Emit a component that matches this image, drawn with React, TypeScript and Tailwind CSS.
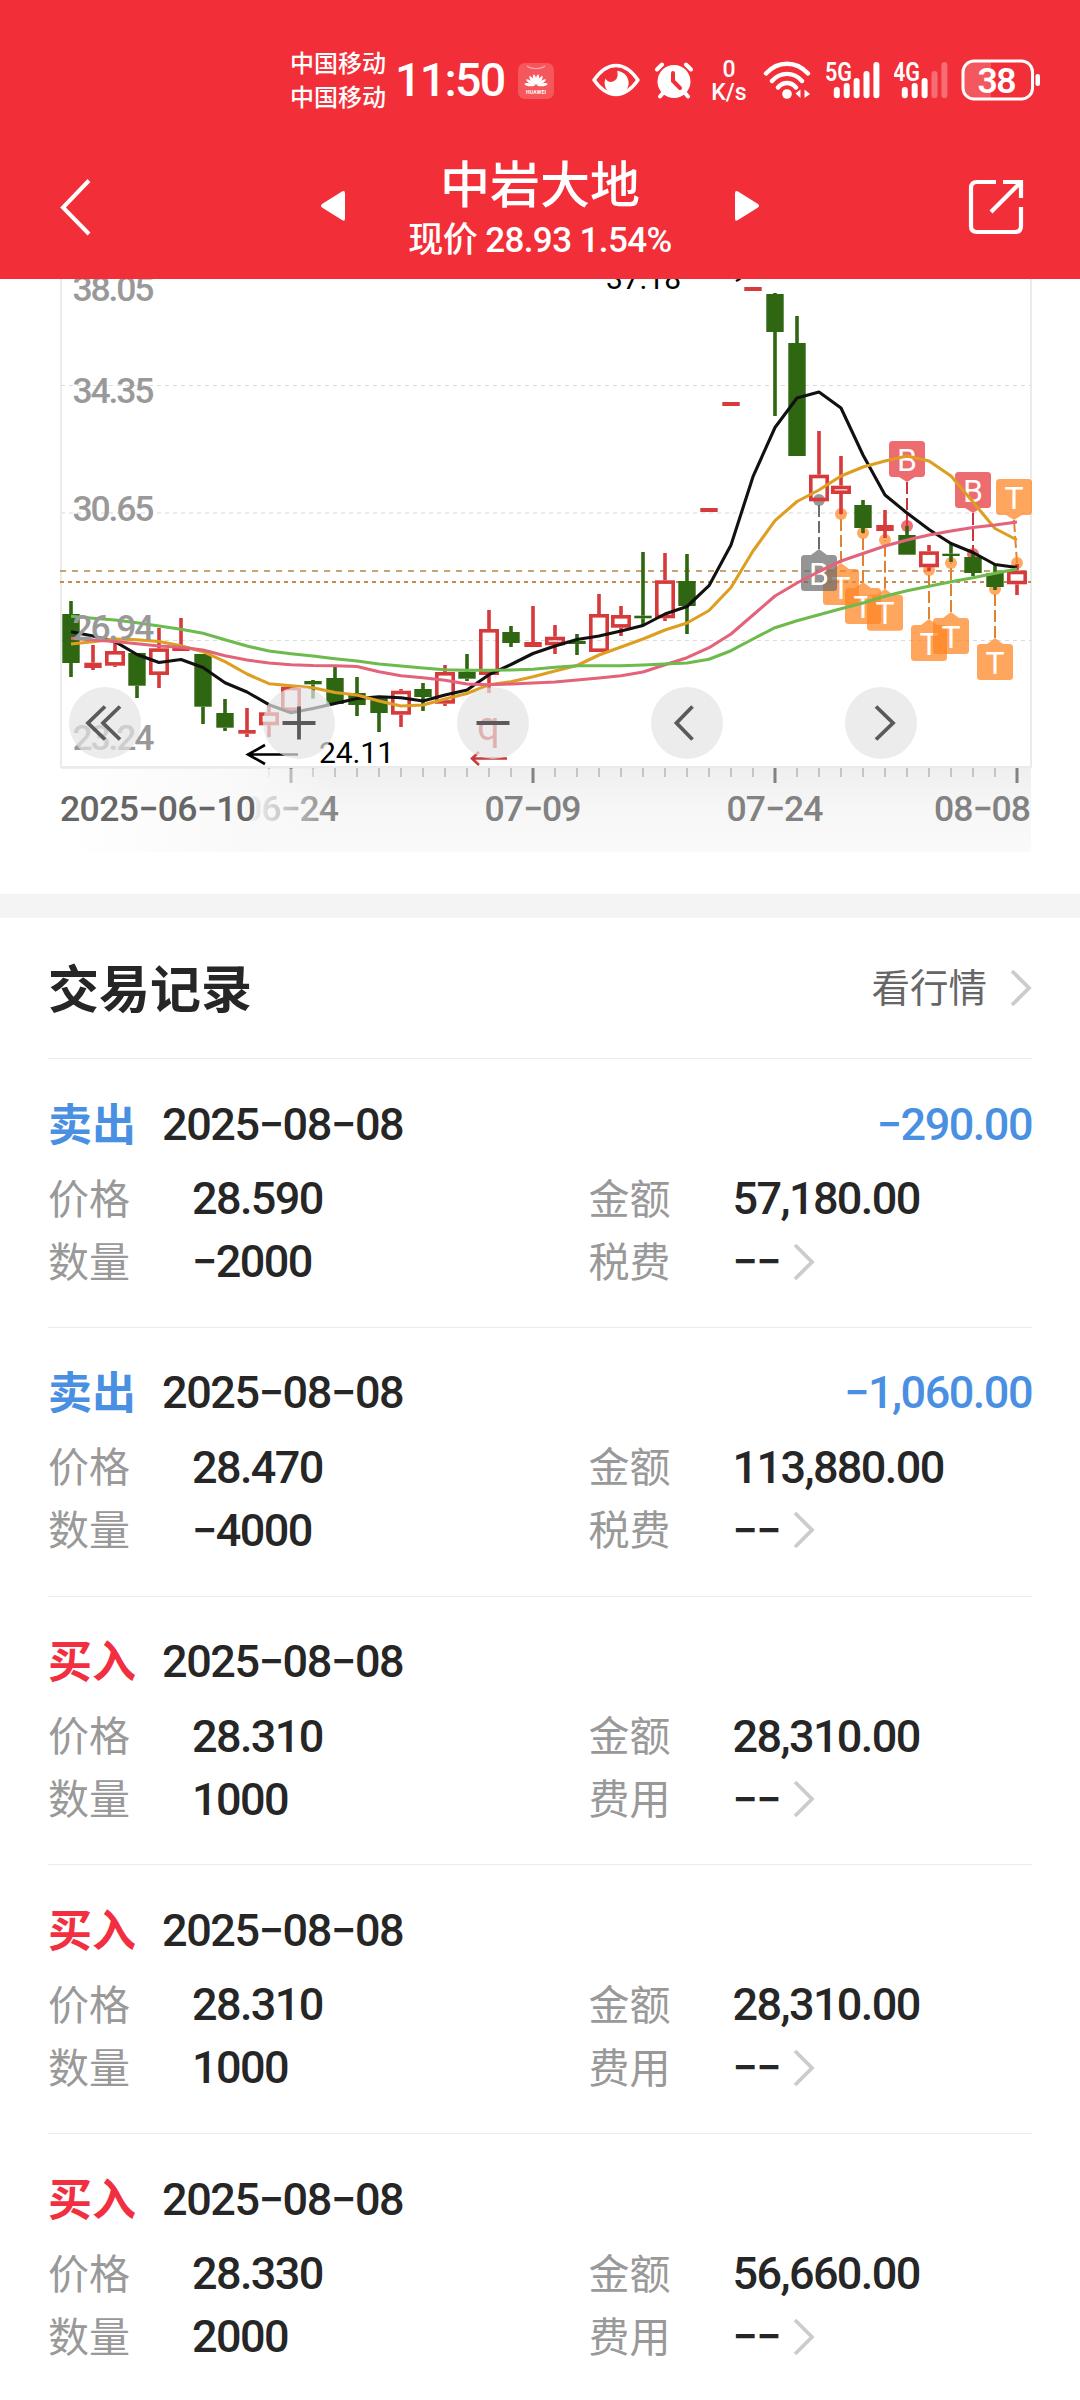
import React from 'react';
import clsx from 'clsx';

interface TradeRecord {
  side: 'sell' | 'buy';
  date: string;
  profit?: string;
  price: string;
  amount: string;
  quantity: string;
}

const records: TradeRecord[] = [
  { side: 'sell', date: '2025−08−08', profit: '−290.00', price: '28.590', amount: '57,180.00', quantity: '−2000' },
  { side: 'sell', date: '2025−08−08', profit: '−1,060.00', price: '28.470', amount: '113,880.00', quantity: '−4000' },
  { side: 'buy', date: '2025−08−08', price: '28.310', amount: '28,310.00', quantity: '1000' },
  { side: 'buy', date: '2025−08−08', price: '28.310', amount: '28,310.00', quantity: '1000' },
  { side: 'buy', date: '2025−08−08', price: '28.330', amount: '56,660.00', quantity: '2000' },
];

// [kind, high, top, bottom, low] - g: falling, r: rising, s: rising with a solid body
type Candle = ['g' | 'r' | 's', number, number, number, number];

const candles: Candle[] = [
  ['g', 601, 614, 663, 677],
  ['s', 645, 662.7, 668, 670],
  ['r', 641, 651, 665.7, 667],
  ['g', 653, 653, 685.7, 698],
  ['r', 628, 648.3, 675, 688],
  ['s', 618, 648, 651, 651],
  ['g', 654, 654, 706.7, 724],
  ['g', 699, 713, 727.7, 731],
  ['s', 708, 730, 733.7, 737],
  ['r', 706, 712.3, 725.3, 737],
  ['r', 686.7, 686.7, 711, 711],
  ['g', 680, 681, 684.3, 698.7],
  ['g', 667, 678, 704, 704],
  ['g', 677, 693, 705, 716],
  ['g', 698, 698, 713, 732],
  ['r', 689, 690.7, 714.7, 727],
  ['g', 683, 689, 697, 711],
  ['r', 665, 672, 703.7, 706],
  ['g', 654, 671.7, 678.7, 681],
  ['r', 610, 629, 675, 693],
  ['g', 626, 632, 643, 647],
  ['s', 606, 642, 647, 647],
  ['r', 625, 636.7, 645.3, 654],
  ['g', 634, 641, 644, 655],
  ['r', 594, 614, 652, 652],
  ['r', 606, 615, 627.7, 636],
  ['g', 552, 615.7, 618.3, 625],
  ['r', 553, 580.3, 618.3, 621],
  ['g', 554, 581, 606, 634],
  ['s', 508, 508, 512, 512],
  ['s', 402, 402, 406, 406],
  ['s', 287, 287, 291, 291],
  ['g', 293, 294, 332, 416],
  ['g', 316, 343, 456, 456],
  ['r', 431, 474.7, 501.3, 501.3],
  ['r', 456, 485.7, 494, 514],
  ['g', 500, 505, 528, 533],
  ['s', 510, 525, 531, 538],
  ['g', 526, 535, 554.7, 554.7],
  ['r', 545, 551.3, 567.3, 571],
  ['g', 544, 553.7, 556, 562],
  ['g', 553, 557, 573, 576],
  ['g', 565, 573, 587, 590],
  ['r', 564, 570.7, 584.3, 595],
];

const ma5 = [
  631.7, 636, 641.7, 654.5, 662.5, 659.5, 667.5, 682.7, 692, 704.7, 712.7, 708.5, 703.5, 698.5, 696.7, 697.7, 701, 695,
  690, 674.7, 664.5, 653.5, 646, 639.5, 636, 631, 625.5, 614, 606.5, 585.7, 545, 476.7, 427.5, 398, 392, 408, 455, 495,
  513, 529.5, 543.5, 552.5, 564.5, 567.5,
];
const ma10 = [
  644, 641.7, 639, 639.7, 641.5, 645.7, 651.7, 661.7, 674, 683.7, 685.7, 687.7, 692.5, 695, 701, 706, 705, 699, 693.5,
  684.7, 681.7, 676.7, 671, 665.5, 655, 647, 639, 630, 623, 610.5, 587.5, 551, 520.7, 501.5, 490, 476, 467, 461, 456,
  461, 476, 502, 528.5, 540,
];
const ma20 = [
  638.3, 640, 641.5, 643.7, 646, 647.3, 650, 655.7, 660, 663, 664.7, 665.5, 665.7, 666.5, 671.7, 675.7, 677.7, 680.3,
  684, 684.7, 684, 683, 682, 680, 678, 675.7, 672, 664.7, 657.7, 647.7, 634, 615, 596, 583, 571.5, 561, 553.5, 546, 540,
  535, 531, 527.5, 525, 522,
];
const ma30 = [
  616.3, 618.3, 620, 622.7, 626, 629.3, 633.3, 639.7, 646, 651, 653.7, 656, 658.7, 661, 664, 666, 668, 669.7, 670.3,
  670.3, 670, 669.3, 667.3, 665.7, 665.7, 665.7, 665, 664, 663, 659.3, 650.7, 639, 627.7, 620.7, 614.7, 608.7, 603,
  596.3, 590.7, 586.3, 581.7, 577.7, 573.3, 569,
];

const markers = [
  { i: 35, label: 'T', top: 569, dot: 514, color: '#ff8420', line: '#e2812f' },
  { i: 36, label: 'T', top: 588, dot: 533, color: '#ff8420', line: '#e2812f' },
  { i: 37, label: 'T', top: 594.7, dot: 540, color: '#ff8420', line: '#e2812f' },
  { i: 39, label: 'T', top: 625, dot: 570, color: '#ff8420', line: '#e2812f' },
  { i: 40, label: 'T', top: 618, dot: 563, color: '#ff8420', line: '#e2812f' },
  { i: 42, label: 'T', top: 644, dot: 589, color: '#ff8420', line: '#e2812f' },
  { i: 43, label: 'T', top: 479, dot: 563, color: '#ff8420', line: '#e2812f', down: true, shift: -3 },
  { i: 34, label: 'B', top: 555, dot: 500, color: '#6c6c6c', line: '#6c6c6c' },
  { i: 38, label: 'B', top: 441, dot: 526, color: '#e63338', line: '#cc3540', down: true },
  { i: 41, label: 'B', top: 472, dot: 554, color: '#e63338', line: '#cc3540', down: true },
];

const yLabels: [string, number][] = [
  ['38.05', 301],
  ['34.35', 403],
  ['30.65', 521],
  ['26.94', 640],
  ['23.24', 749.5],
];

const px = (i: number) => 71 + i * 22;
const toPoints = (values: number[]) => values.map((v, i) => `${px(i)},${v}`).join(' ');

const CandleShape: React.FC<{ candle: Candle; x: number }> = ({ candle, x }) => {
  const [kind, high, top, bottom, low] = candle;
  const color = kind === 'g' ? '#2f6611' : '#d73a3a';
  return (
    <g fill={color}>
      {high < top && <rect x={x - 1.8} y={high} width={3.6} height={top - high} />}
      {low > bottom && <rect x={x - 1.8} y={bottom} width={3.6} height={low - bottom} />}
      {kind === 'r' ? (
        <rect x={x - 8.2} y={top + 1.8} width={16.4} height={bottom - top - 3.6} fill="none" stroke={color} strokeWidth={3.6} />
      ) : (
        <rect x={x - 8.7} y={top} width={17.4} height={bottom - top} />
      )}
    </g>
  );
};

const KLineChart: React.FC = () => (
  <svg width="1080" height="573" viewBox="0 279 1080 573" className="block font-[Roboto,sans-serif]">
    <defs>
      <linearGradient id="axisBg" x1="0" y1="0" x2="0" y2="1">
        <stop offset="0" stopColor="#efefef" />
        <stop offset="0.5" stopColor="#f7f7f7" />
        <stop offset="1" stopColor="#fafafa" />
      </linearGradient>
      <linearGradient id="axisFade" x1="0" y1="0" x2="1" y2="0">
        <stop offset="0" stopColor="#ffffff" />
        <stop offset="0.66" stopColor="#f9f9f9" />
        <stop offset="1" stopColor="#f9f9f9" stopOpacity="0" />
      </linearGradient>
    </defs>

    {/* Frame and grid */}
    <g stroke="#ebebeb" strokeWidth="2" fill="none">
      <path d="M61 279V767H1031V279" />
      <path d="M61 385.5H1031" stroke="#dadada" strokeWidth="1" strokeDasharray="4 4" />
      <path d="M61 513H1031" strokeDasharray="4 4" />
      <path d="M61 640.5H1031" stroke="#dadada" strokeWidth="1" strokeDasharray="4 4" />
      <path d="M60 571H1031" stroke="#c6a572" strokeDasharray="6 6" />
      <path d="M60 582H1031" stroke="#c48d4c" strokeDasharray="4 4" />
    </g>

    {/* Trade markers */}
    {markers.map((m) => {
      const x = px(m.i);
      const bx = x + (m.shift ?? 0);
      const tip = m.down ? m.top + 41 : m.top - 6;
      const base = m.down ? m.top + 36 : m.top;
      return (
        <g key={m.i}>
          <path d={`M${bx} ${tip}L${x} ${m.dot}`} stroke={m.line} strokeWidth="2" strokeDasharray="12 4" />
          <circle cx={x} cy={m.dot} r="6" fill={m.color} fillOpacity="0.7" />
          <g fill={m.color} fillOpacity="0.72">
            <rect x={bx - 18} y={m.top} width="36" height="36" rx="3.5" />
            <path d={`M${bx - 8} ${base}L${bx} ${tip}L${bx + 8} ${base}Z`} />
          </g>
          <text x={bx} y={m.top + 29.5} fontSize="32" fill="#fff" textAnchor="middle">
            {m.label}
          </text>
        </g>
      );
    })}

    {candles.map((candle, i) => (
      <CandleShape key={i} candle={candle} x={px(i)} />
    ))}

    {/* Moving averages */}
    <g fill="none" strokeWidth="3.1" strokeLinejoin="round">
      <polyline points={toPoints(ma5)} stroke="#111111" />
      <polyline points={toPoints(ma10)} stroke="#dd9e22" />
      <polyline points={toPoints(ma20)} stroke="#e2637a" />
      <polyline points={toPoints(ma30)} stroke="#6dba4d" />
    </g>

    {/* Price labels */}
    <g fontSize="35.5" fontWeight="500" fill="#999">
      {yLabels.map(([label, y]) => (
        <text key={label} x="72.5" y={y} textLength="82">
          {label}
        </text>
      ))}
    </g>
    <g fontSize="30" fill="#000">
      <text x="606" y="289" textLength="75">37.18</text>
      <text x="319" y="763" textLength="75">24.11</text>
    </g>
    <text x="477" y="740" fontSize="40" fill="#d73a3a">q</text>
    <g fill="none" stroke="#000" strokeWidth="2.6">
      <path d="M298 754.5H248M265 745L248 754.5L265 764" />
      <path d="M734 277L740 279.5M736 281L741 278" />
      <path d="M507 758.5H472M479 752L472 758.5L479 765" stroke="#c93a3a" />
    </g>

    {/* Date axis */}
    <rect x="61" y="768" width="970" height="84" fill="url(#axisBg)" />
    {candles.map(
      (_, i) =>
        i >= 9 && (
          <rect
            key={i}
            x={px(i) - (i % 11 === 10 ? 1.5 : 0.5)}
            y="768"
            width={i % 11 === 10 ? 3 : 1}
            height={i % 11 === 10 ? 15 : 9}
            fill={i % 11 === 10 ? '#828282' : '#999'}
          />
        ),
    )}
    <g fontSize="35.5" fontWeight="500" fill="#828282">
      <text x="242" y="821" textLength="97">06−24</text>
      <text x="484.5" y="821" textLength="97">07−09</text>
      <text x="726.5" y="821" textLength="97">07−24</text>
      <text x="934" y="821" textLength="97">08−08</text>
    </g>
    <rect x="61" y="769" width="277" height="83" fill="url(#axisFade)" />
    <text x="60" y="821" fontSize="35.5" fontWeight="500" fill="#666" textLength="196">2025−06−10</text>
  </svg>
);

const controls = [
  'M0 -16.5L-17 0L0 16.5M15 -16.5L-2 0L15 16.5',
  'M-16.5 0H16.5M0 -16.5V16.5',
  'M-16.5 0H16.5',
  'M5.5 -16.5L-10.5 0L5.5 16.5',
  'M-5 -16.5L12 0L-5 16.5',
];

const ChevronRight: React.FC<{ className?: string }> = ({ className }) => (
  <svg width="22" height="38" viewBox="0 0 22 38" fill="none" stroke="#ccc" strokeWidth="3.8" className={className}>
    <path d="M2 2L19 19L2 36" />
  </svg>
);

const SignalBars: React.FC<{ label: string; active: number; className?: string }> = ({ label, active, className }) => (
  <svg width="54" height="40" viewBox="0 0 54 40" fill="#fff" className={className}>
    <text x="-1" y="20.5" fontSize="25" fontWeight="600" textLength="27" lengthAdjust="spacingAndGlyphs">
      {label}
    </text>
    {[27, 23, 18, 11, 2].map((y, i) => (
      <rect key={y} x={7.8 + i * 9.9} y={y} width="6" height={38.3 - y} rx="3" fillOpacity={i < active ? 1 : 0.3} />
    ))}
  </svg>
);

const StatusBar: React.FC = () => (
  <div className="flex h-[160px] items-center pl-[290px] font-medium">
    <div className="mt-[2px] w-[97px] shrink-0 text-[24px] leading-[34px]">
      <div>中国移动</div>
      <div>中国移动</div>
    </div>
    <div className="ml-[8px] w-[116px] shrink-0 text-[46.5px] leading-none tracking-[-1.7px]">11:50</div>
    <svg width="36" height="36" viewBox="0 0 36 36" className="ml-[7px] mt-[2px] shrink-0">
      <rect width="36" height="36" rx="7" fill="#f4585d" />
      <path d="M9 3C13 6.5 23 6.5 27 3" fill="none" stroke="#f9a5a8" strokeWidth="1.2" />
      <g fill="#fff">
        {[-80, -56, -33, -11, 11, 33, 56, 80].map((angle) => (
          <path key={angle} d="M18 22C16 17 16 13 18 11C20 13 20 17 18 22Z" transform={`rotate(${angle} 18 23)`} />
        ))}
      </g>
      <text x="18" y="31" fontSize="5" fontWeight="700" fill="#fff" textAnchor="middle" textLength="20">HUAWEI</text>
    </svg>
    <svg width="48" height="34" viewBox="0 0 48 34" className="ml-[38px] shrink-0">
      <path d="M2 17C9 7 16 2.5 24 2.5S39 7 46 17C39 27 32 31.5 24 31.5S9 27 2 17Z" fill="none" stroke="#fff" strokeWidth="3.4" strokeLinejoin="round" />
      <path d="M25 8A12 12 0 1 1 13.5 15.5C15 18.5 18 19.5 21 18.5C25.5 17 26.5 12 25 8Z" fill="#fff" />
    </svg>
    <svg width="40" height="38" viewBox="0 0 40 38" className="ml-[14px] shrink-0" fill="none" stroke="#fff" strokeLinecap="round">
      <circle cx="20" cy="20.5" r="16.5" fill="#fff" stroke="none" />
      <path d="M3 8.5L8 3.5M37 8.5L32 3.5M9 32L6 35.5M31 32L34 35.5" strokeWidth="4" />
      <path d="M19 12V20L26 27" stroke="#f22f38" strokeWidth="4" />
    </svg>
    <div className="ml-[15px] mt-[1px] w-[40px] shrink-0 text-center text-[23px] leading-[23px]">
      <div>0</div>
      <div>K/s</div>
    </div>
    <svg width="48" height="40" viewBox="0 0 48 40" className="ml-[14px] shrink-0" fill="none" stroke="#fff" strokeWidth="4.4" strokeLinecap="round">
      <path d="M3 13.5C15 0.5 33 0.5 45 13.5M9 21C17.5 11.5 30.5 11.5 39 21M15 27.500C20 21.500 28 21.500 33 27.500" />
      <circle cx="24" cy="34" r="4.8" fill="#fff" stroke="none" />
      <path d="M37.5 29.5V38L32.5 33.5ZM41.5 38V29.5L47 34Z" fill="#fff" stroke="none" />
    </svg>
    <SignalBars label="5G" active={5} className="ml-[15px] shrink-0" />
    <SignalBars label="4G" active={3} className="ml-[14px] shrink-0" />
    <svg width="80" height="42" viewBox="0 0 80 42" className="ml-[13px] shrink-0">
      <path d="M13 1.5H30V40.5H13C6.5 40.5 2 36 2 29V13C2 6 6.5 1.5 13 1.5Z" fill="#fff" fillOpacity="0.2" />
      <rect x="2" y="2" width="69.500" height="38" rx="11" fill="none" stroke="#fff" strokeWidth="3" />
      <rect x="74.5" y="15" width="4.5" height="12" rx="2" fill="#fff" />
      <text x="36" y="33.5" fontSize="35.5" fontWeight="600" fill="#fff" textAnchor="middle" textLength="39">38</text>
    </svg>
  </div>
);

const NavBar: React.FC = () => (
  <div className="grid h-[119px] grid-cols-[260px_440px_1fr] items-start pl-[60px] pr-[55px]">
    <svg width="34" height="58" viewBox="0 0 34 58" className="mt-[18px]" fill="none" stroke="#fff" strokeWidth="4">
      <path d="M29 2.5L3 29.5L29 56" />
    </svg>
    <div className="flex items-start justify-between">
      <svg width="26" height="32" viewBox="0 0 26 32" className="mt-[30px]" fill="#fff">
        <path d="M22 1.5Q25 0 25 3.5V28.5Q25 32 22 30L2 17.5Q0 16 2 14Z" />
      </svg>
      <div className="flex flex-col items-center whitespace-nowrap">
        <div className="text-[50px] font-medium leading-[52px]">中岩大地</div>
        <div className="mt-[9px] text-[35px] font-medium leading-[40px] tracking-[-0.6px]">现价 28.93 1.54%</div>
      </div>
      <svg width="26" height="32" viewBox="0 0 26 32" className="mt-[30px]" fill="#fff">
        <path d="M4 1.5Q1 0 1 3.5V28.5Q1 32 4 30L24 17.5Q26 16 24 14Z" />
      </svg>
    </div>
    <svg width="58" height="58" viewBox="0 0 58 58" className="mt-[18px] justify-self-end" fill="none" stroke="#fff" strokeWidth="4.2">
      <path d="M29 4H10Q4 4 4 10V48Q4 54 10 54H48Q54 54 54 48V29M36 4H54V20M54 4L24 34" />
    </svg>
  </div>
);

const Field: React.FC<{ label: string; value: string; link?: boolean }> = ({ label, value, link }) => (
  <div className="flex h-[63px] items-center">
    <span className="w-[144px] pt-[3px] text-[41px] text-[#999]">{label}</span>
    <span className="text-[45px] font-medium tracking-[-1.6px]">{value}</span>
    {link && <ChevronRight className="ml-[13px]" />}
  </div>
);

const TradeRow: React.FC<{ record: TradeRecord }> = ({ record }) => {
  const isSell = record.side === 'sell';
  return (
    <div className="h-[268.8px] border-t border-[#ebebeb] pt-[33px]">
      <div className="flex h-[64px] items-center">
        <span className={clsx('w-[114px] pt-[3px] text-[44px] font-bold', isSell ? 'text-[#4a90e2]' : 'text-[#f22f40]')}>
          {isSell ? '卖出' : '买入'}
        </span>
        <span className="text-[45px] font-medium tracking-[-1.4px]">{record.date}</span>
        <span className="ml-auto text-[45px] font-medium tracking-[-1.5px] text-[#4a90e2]">{record.profit}</span>
      </div>
      <div className="mt-[11px] grid grid-cols-[540.5px_1fr]">
        <Field label="价格" value={record.price} />
        <Field label="金额" value={record.amount} />
        <Field label="数量" value={record.quantity} />
        <Field label={isSell ? '税费' : '费用'} value="−−" link />
      </div>
    </div>
  );
};

export default function App() {
  return (
    <div className="h-[2400px] w-[1080px] overflow-hidden bg-white font-[Roboto,'Noto_Sans_CJK_SC',sans-serif] leading-none text-[#262626]">
      <header className="h-[279px] bg-[#f22f38] text-white">
        <StatusBar />
        <NavBar />
      </header>

      <section className="relative h-[615px]">
        <KLineChart />
        {/* Floating chart controls */}
        <div className="absolute left-[69px] top-[408px] flex gap-[122px]">
          {controls.map((d) => (
            <button key={d} className="size-[72px] rounded-full bg-[#e4e4e4]/70">
              <svg width="72" height="72" viewBox="-36 -36 72 72" fill="none" stroke="#5a5a5a" strokeWidth="3.8">
                <path d={d} />
              </svg>
            </button>
          ))}
        </div>
      </section>

      <div className="h-[24px] bg-[#f4f4f4]" />

      <section className="px-[48px]">
        <div className="flex h-[140px] items-center justify-between">
          <h2 className="pt-[4px] text-[51px] font-bold">交易记录</h2>
          <div className="flex items-center gap-[23px] text-[38.5px] text-[#666]">
            <span className="pt-[3px]">看行情</span>
            <ChevronRight />
          </div>
        </div>
        {records.map((record, i) => (
          <TradeRow key={i} record={record} />
        ))}
      </section>
    </div>
  );
}
